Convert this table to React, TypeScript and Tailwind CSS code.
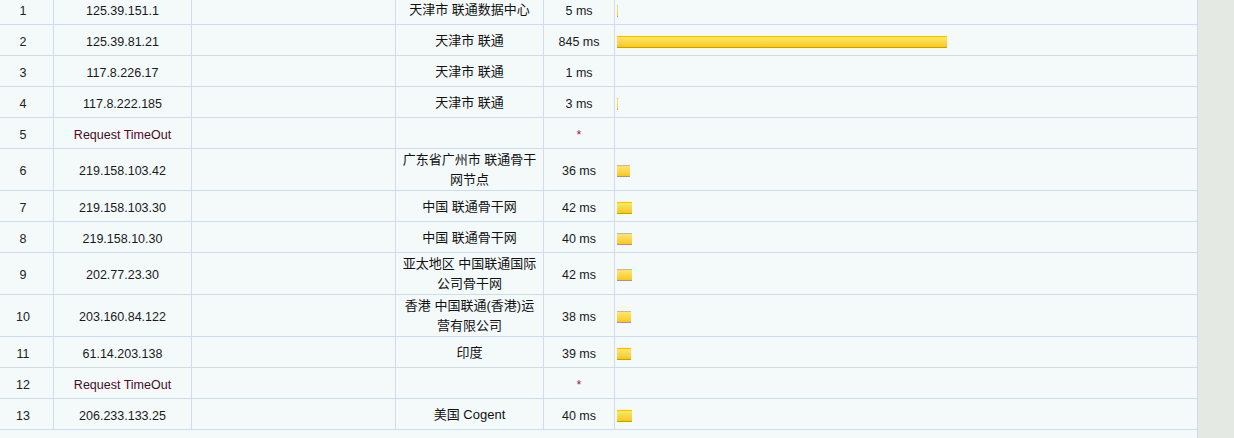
const hops = [
  { no: 1, ip: "125.39.151.1", loc: "天津市 联通数据中心", ms: "5 ms", bar: 1 },
  { no: 2, ip: "125.39.81.21", loc: "天津市 联通", ms: "845 ms", bar: 330 },
  { no: 3, ip: "117.8.226.17", loc: "天津市 联通", ms: "1 ms", bar: 0 },
  { no: 4, ip: "117.8.222.185", loc: "天津市 联通", ms: "3 ms", bar: 1 },
  { no: 5, ip: "Request TimeOut", loc: "", ms: "*", bar: 0 },
  { no: 6, ip: "219.158.103.42", loc: "广东省广州市 联通骨干网节点", ms: "36 ms", bar: 13 },
  { no: 7, ip: "219.158.103.30", loc: "中国 联通骨干网", ms: "42 ms", bar: 15 },
  { no: 8, ip: "219.158.10.30", loc: "中国 联通骨干网", ms: "40 ms", bar: 15 },
  { no: 9, ip: "202.77.23.30", loc: "亚太地区 中国联通国际公司骨干网", ms: "42 ms", bar: 15 },
  { no: 10, ip: "203.160.84.122", loc: "香港 中国联通(香港)运营有限公司", ms: "38 ms", bar: 14 },
  { no: 11, ip: "61.14.203.138", loc: "印度", ms: "39 ms", bar: 14 },
  { no: 12, ip: "Request TimeOut", loc: "", ms: "*", bar: 0 },
  { no: 13, ip: "206.233.133.25", loc: "美国 Cogent", ms: "40 ms", bar: 15 },
];

const cell = "flex items-center justify-center border-r border-[#cfdcee] text-center";

const App = () => {
  return (
    <div className="h-[438px] overflow-hidden bg-[#e5e9e4] font-['Liberation_Sans','Noto_Sans_CJK_SC',sans-serif]">
      <div className="-ml-[7px] -mt-[6px] h-[460px] w-[1205px] border-r border-[#cfdcee] bg-[#f4f9fa]">
        {hops.map((hop) => {
          const timeout = hop.ip === "Request TimeOut";
          return (
            <div
              key={hop.no}
              className="flex min-h-[31px] border-b border-[#cfdcee] text-[12.5px] leading-[20px]"
            >
              <div className={`${cell} w-[61px] pt-[3px] text-[#222]`}>
                {hop.no}
              </div>
              <div
                className={`${cell} w-[138px] pt-[3px] ${
                  timeout ? "text-[#4a0c24]" : "text-[#1a1a1a]"
                }`}
              >
                {hop.ip}
              </div>
              <div className={`${cell} w-[204px]`} />
              <div
                className={`${cell} w-[148px] px-[4px] pt-px text-[13px] text-[#111]`}
              >
                {hop.loc}
              </div>
              <div
                className={`${cell} w-[71px] pt-[3px] ${
                  timeout ? "text-[#a02040]" : "text-[#1a1a1a]"
                }`}
              >
                {hop.ms}
              </div>
              <div className="flex w-[582px] items-center pl-[2px] pt-[3px]">
                {hop.bar > 0 && (
                  <div
                    className="h-[12px] border-t border-b border-t-[#f2c200] border-b-[#9a9a9a] bg-gradient-to-b from-[#ffe66a] to-[#ffc800]"
                    style={{ width: hop.bar }}
                  />
                )}
              </div>
            </div>
          );
        })}
      </div>
    </div>
  );
};

export default App;
